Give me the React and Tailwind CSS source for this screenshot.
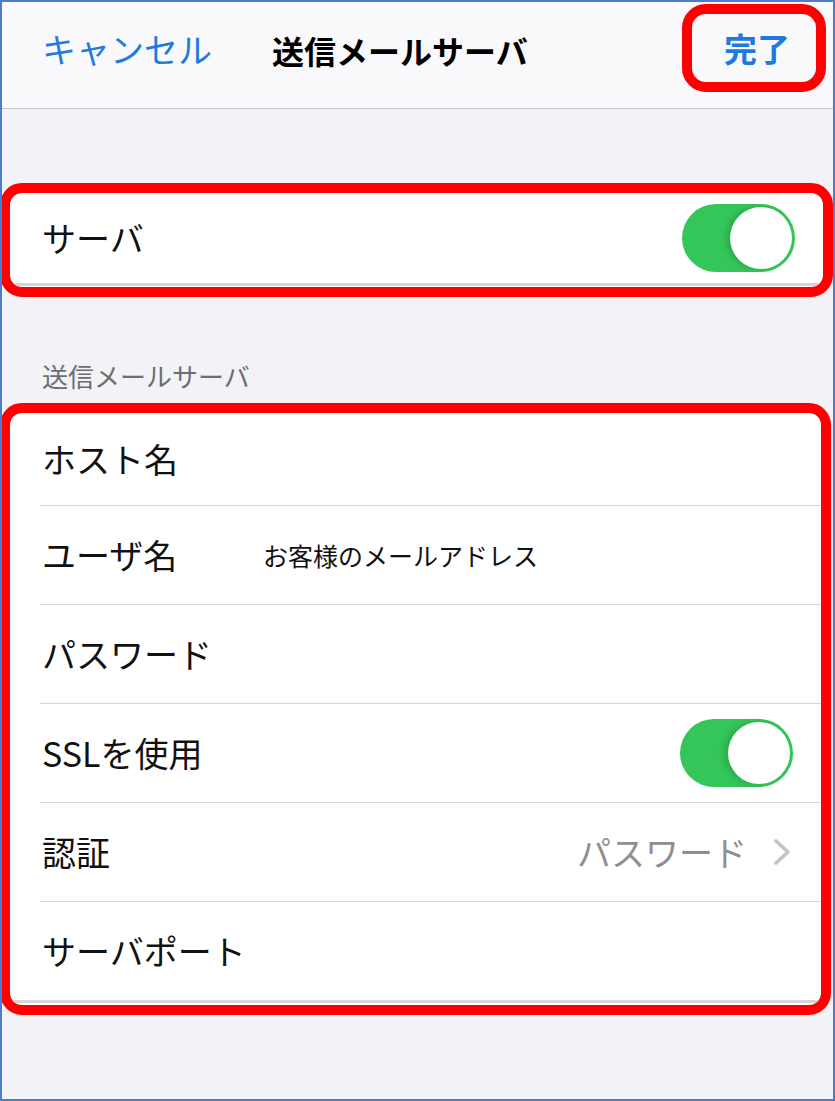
import React from "react";

function Toggle() {
  return (
    <div className="flex h-[68px] w-[113px] items-center justify-end rounded-full bg-[#35c65a] p-[3px]">
      <div className="h-[62px] w-[62px] rounded-full bg-white shadow-[-4px_0_6px_rgba(0,70,20,0.22)]" />
    </div>
  );
}

function Chevron() {
  return (
    <svg width="18" height="26" viewBox="0 0 18 26" className="block">
      <polyline
        points="3,2 15,13 3,24"
        fill="none"
        stroke="#c4c4c8"
        strokeWidth="3.6"
        strokeLinecap="round"
        strokeLinejoin="round"
      />
    </svg>
  );
}

function Row({ h, label, right, value, last }) {
  return (
    <div
      className={`ml-[30px] flex items-center pl-[2px] pr-[28px] ${h} ${
        last ? "" : "border-b border-[#d6d6da]"
      }`}
    >
      <div className="w-[221px] shrink-0 text-[34px] leading-none text-[#111]">{label}</div>
      {value && <div className="text-[25px] leading-none text-[#111]">{value}</div>}
      <div className="ml-auto flex items-center">{right}</div>
    </div>
  );
}

export default function App() {
  return (
    <div className="h-[1101px] w-[835px] overflow-hidden border-2 border-[#4a7cd0] bg-[#f2f2f7] font-['Noto_Sans_CJK_JP',sans-serif]">
      {/* Header */}
      <div className="flex h-[107px] items-start border-b border-[#c6c6cb] bg-[#f9f9fb]">
        <div className="ml-[40px] mt-[30px] text-[34px] leading-none text-[#1f7ae0]">キャンセル</div>
        <div className="ml-[60px] mt-[32px] text-[32px] font-bold leading-none text-black">送信メールサーバ</div>
        <div className="ml-auto mr-[7px] mt-[2px] flex h-[88px] w-[144px] items-center justify-center rounded-[24px] border-[10px] border-[#ff0000]">
          <span className="ml-[6px] text-[33px] font-bold leading-none text-[#1f7ae0]">完了</span>
        </div>
      </div>

      {/* Server switch */}
      <div className="-ml-[2px] mt-[74px] w-[833px] overflow-hidden rounded-[22px] border-[10px] border-[#ff0000] bg-white pb-[1px]">
        <div className="flex h-[90px] items-center pl-[32px] pr-[28px]">
          <div className="text-[34px] leading-none text-[#111]">サーバ</div>
          <div className="ml-auto">
            <Toggle />
          </div>
        </div>
        <div className="h-[3px] bg-[#d6d6da]" />
      </div>

      {/* Section label */}
      <div className="ml-[40px] mt-[66px] text-[26px] leading-none text-[#6d6d72]">送信メールサーバ</div>

      {/* Outgoing server details */}
      <div className="-ml-[2px] mt-[14px] w-[831px] overflow-hidden rounded-[22px] border-[10px] border-[#ff0000] bg-white pb-[2px]">
        <Row h="h-[93px]" label="ホスト名" />
        <Row h="h-[99px]" label="ユーザ名" value="お客様のメールアドレス" />
        <Row h="h-[99px]" label="パスワード" />
        <Row h="h-[99px]" label="SSLを使用" right={<Toggle />} />
        <Row
          h="h-[99px]"
          label="認証"
          right={
            <div className="flex items-center">
              <span className="text-[34px] leading-none text-[#8e8e93]">パスワード</span>
              <span className="ml-[26px] mr-[2px]">
                <Chevron />
              </span>
            </div>
          }
        />
        <Row h="h-[98px]" label="サーバポート" last />
        <div className="h-[3px] bg-[#d6d6da]" />
      </div>
    </div>
  );
}
